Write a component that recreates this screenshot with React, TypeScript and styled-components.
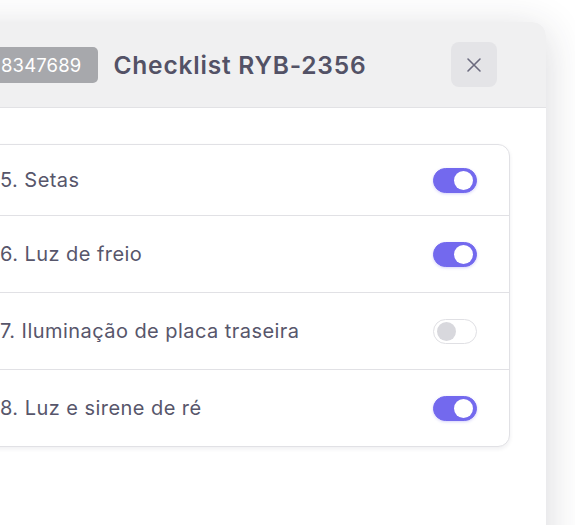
import styled, { createGlobalStyle } from "styled-components";

type Item = {
  label: string;
  checked: boolean;
};

const items: Array<Item> = [
  { label: "5. Setas", checked: true },
  { label: "6. Luz de freio", checked: true },
  { label: "7. Iluminação de placa traseira", checked: false },
  { label: "8. Luz e sirene de ré", checked: true },
];

//styles
const GlobalStyle = createGlobalStyle`
  html, body {
    margin: 0;
    padding: 0;
    background: #ffffff;
    font-family: Inter, "Noto Sans", sans-serif;
    overflow: hidden;
  }
`;
const Page = styled.div`
  width: 575px;
  height: 525px;
  overflow: hidden;
  display: flex;
  justify-content: flex-end;
  padding: 22px 29px 0 0;
  box-sizing: border-box;
`;
const Panel = styled.section`
  flex: 0 0 614px;
  height: 560px;
  background: #ffffff;
  border-radius: 14px 14px 0 0;
  box-shadow: 0 8px 40px rgba(40, 40, 60, 0.19);
  overflow: hidden;
`;
const Header = styled.header`
  height: 85px;
  display: flex;
  align-items: center;
  gap: 15px;
  padding: 0 49px 0 52px;
  background: #f0f0f1;
  border-bottom: 1px solid #e2e2e5;
`;
const Badge = styled.span`
  height: 36px;
  display: inline-flex;
  align-items: center;
  padding: 0 17px 0 17px;
  border-radius: 5px;
  background: #a7a8ac;
  color: #ffffff;
  font-size: 18.5px;
  letter-spacing: 0.15px;
`;
const Title = styled.h2`
  flex: 1;
  margin: 0;
  font-size: 24.5px;
  font-weight: 600;
  letter-spacing: 0.8px;
  color: #535266;
`;
const CloseButton = styled.button`
  width: 46px;
  height: 45px;
  display: flex;
  align-items: center;
  justify-content: center;
  border: 0;
  border-radius: 8px;
  background: #e4e4e7;
  color: #6b6a7e;
  padding: 0;
`;
const Body = styled.div`
  padding: 36px 36px 0 36px;
`;
const Card = styled.div`
  border: 1px solid #e1e1e5;
  border-radius: 12px;
  box-shadow: 0 2px 4px rgba(30, 30, 50, 0.07);
  background: #ffffff;
`;
const Row = styled.div<{ $first: boolean }>`
  height: ${(p) => (p.$first ? "70px" : "76px")};
  display: flex;
  align-items: center;
  justify-content: space-between;
  padding: 0 32px 0 31px;
  font-size: 20px;
  letter-spacing: 0.45px;
  color: #57566b;
  &:not(:last-child) {
    border-bottom: 1px solid #e1e1e5;
  }
`;
const Toggle = styled.span<{ $on: boolean }>`
  width: 44px;
  height: 25px;
  box-sizing: border-box;
  display: flex;
  align-items: center;
  justify-content: ${(p) => (p.$on ? "flex-end" : "flex-start")};
  padding: 0 3px;
  border-radius: 13px;
  background: ${(p) => (p.$on ? "#7369ee" : "#ffffff")};
  border: 1px solid ${(p) => (p.$on ? "#7369ee" : "#e0e0e4")};
  box-shadow: ${(p) => (p.$on ? "0 1px 3px rgba(115, 105, 238, 0.3)" : "none")};
`;
const Knob = styled.span<{ $on: boolean }>`
  width: 19px;
  height: 19px;
  border-radius: 50%;
  background: ${(p) => (p.$on ? "#ffffff" : "#d8d8dd")};
`;

export default function App() {
  return (
    <>
      <GlobalStyle />
      <Page>
        <Panel>
          <Header>
            <Badge>8347689</Badge>
            <Title>Checklist RYB-2356</Title>
            <CloseButton aria-label="Fechar">
              <svg width="16" height="16" viewBox="0 0 16 16" fill="none">
                <path
                  d="M2 2L14 14M14 2L2 14"
                  stroke="currentColor"
                  strokeWidth="1.6"
                  strokeLinecap="round"
                />
              </svg>
            </CloseButton>
          </Header>
          <Body>
            <Card>
              {items.map((item, i) => (
                <Row key={item.label} $first={i === 0}>
                  <span>{item.label}</span>
                  <Toggle $on={item.checked}>
                    <Knob $on={item.checked} />
                  </Toggle>
                </Row>
              ))}
            </Card>
          </Body>
        </Panel>
      </Page>
    </>
  );
}
